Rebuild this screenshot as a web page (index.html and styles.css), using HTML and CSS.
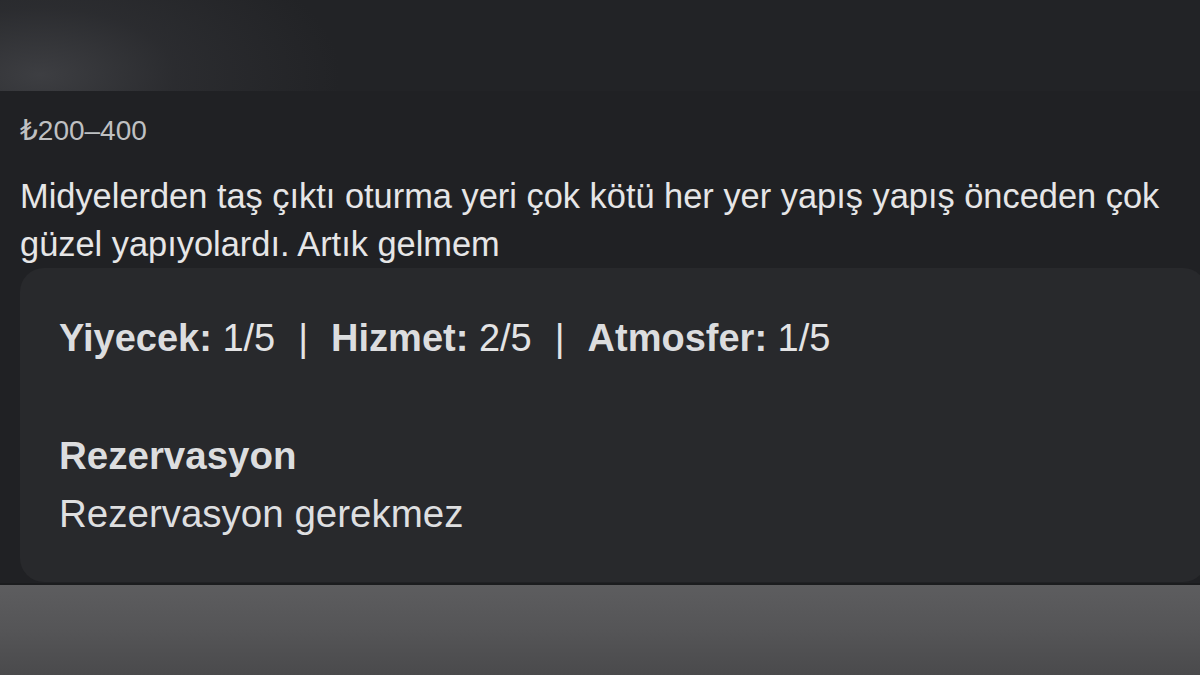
FILE: index.html
```html
<!DOCTYPE html>
<html lang="tr">
<head>
<meta charset="utf-8">
<title>Yorum</title>
<link rel="stylesheet" href="styles.css">
</head>
<body>
<div class="screen">
  <div class="top-band"></div>
  <main class="content">
    <div class="price">₺200–400</div>
    <p class="review">Midyelerden taş çıktı oturma yeri çok kötü her yer yapış yapış önceden çok güzel yapıyolardı. Artık gelmem</p>
    <section class="card">
      <div class="ratings">
        <span class="rating"><b>Yiyecek:</b> 1/5</span>
        <span class="sep">|</span>
        <span class="rating"><b>Hizmet:</b> 2/5</span>
        <span class="sep">|</span>
        <span class="rating"><b>Atmosfer:</b> 1/5</span>
      </div>
      <div class="field">
        <div class="field-title">Rezervasyon</div>
        <div class="field-value">Rezervasyon gerekmez</div>
      </div>
    </section>
  </main>
  <div class="bottom-band"></div>
</div>
</body>
</html>
```

FILE: styles.css
```css
html, body {
  margin: 0;
  padding: 0;
}
body {
  width: 1200px;
  height: 675px;
  overflow: hidden;
  background: #202124;
  font-family: "Liberation Sans", Arial, "DejaVu Sans", sans-serif;
}
.screen {
  display: flex;
  flex-direction: column;
  height: 675px;
}
.top-band {
  height: 91px;
  flex: none;
  background:
    radial-gradient(ellipse 300px 150px at 40px 75px, rgba(68,69,73,0.8) 0%, rgba(52,53,57,0.5) 45%, rgba(35,36,39,0) 100%),
    #222326;
}
.content {
  flex: none;
  padding-left: 20px;
  height: 492px;
  display: flex;
  flex-direction: column;
}
.price {
  margin-top: 20px;
  font-family: "Liberation Sans", "DejaVu Sans", sans-serif;
  font-size: 28px;
  line-height: 40px;
  color: #bfc0c2;
}
.review {
  margin: 21px 0 0 0;
  font-size: 34.4px;
  line-height: 48px;
  color: #e6e6e7;
  padding-right: 10px;
}
.card {
  width: 1187px;
  box-sizing: border-box;
  height: 314px;
  background: #28292c;
  border-radius: 24px;
  padding: 45px 0 0 39px;
}
.ratings {
  display: flex;
  align-items: center;
  height: 50px;
  font-size: 38px;
  color: #e3e3e4;
  white-space: nowrap;
}
.rating b {
  font-weight: bold;
  color: #dcdddf;
}
.sep {
  margin: 0 23px;
  color: #e3e3e4;
}
.field {
  margin-top: 64px;
}
.field-title {
  font-size: 38.5px;
  line-height: 58px;
  font-weight: bold;
  color: #dcdddf;
}
.field-value {
  font-size: 38.5px;
  line-height: 58px;
  color: #dedfe0;
}
.bottom-band {
  flex: none;
  height: 92px;
  border-top: 2px solid #1b1c1e;
  box-sizing: border-box;
  background: linear-gradient(180deg, #5d5d5f 0%, #555557 50%, #4a4a4c 100%);
}
```
